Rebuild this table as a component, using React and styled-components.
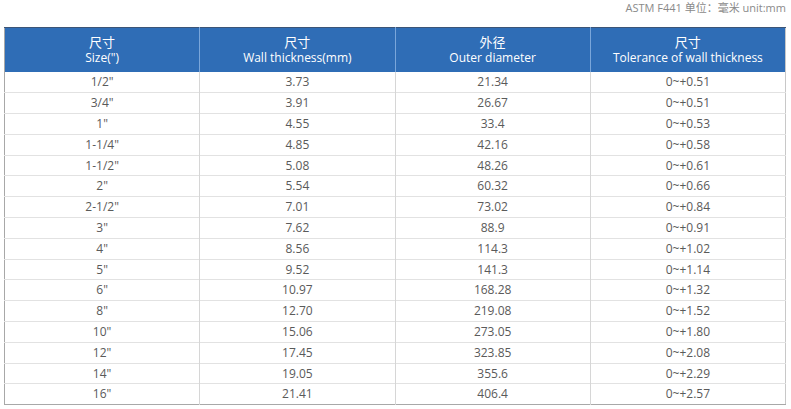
import React from "react";
import styled, { createGlobalStyle } from "styled-components";

const Global = createGlobalStyle`
  html, body { margin: 0; padding: 0; background: #fff; }
  body { font-family: "Open Sans", "Noto Sans", "Noto Sans CJK SC", sans-serif; }
`;

const Page = styled.div`
  width: 791px;
  padding: 0 5px 0 4px;
  box-sizing: border-box;
`;

const Caption = styled.div`
  height: 27px;
  display: flex;
  justify-content: flex-end;
  align-items: flex-start;
  padding-top: 1px;
  box-sizing: border-box;
  font-size: 11px;
  line-height: 14px;
  color: #8a8a8a;
  font-family: "Open Sans", "Noto Sans CJK SC", sans-serif;
`;

const Table = styled.table`
  width: 782px;
  border-collapse: collapse;
  table-layout: fixed;
  border-left: 1px solid #a8a8a8;
  border-right: 1px solid #c8c8c8;
  border-bottom: 1px solid #a8a8a8;
`;

const HeadRow = styled.tr`
  background: #2f6db6;
  border-top: 1px solid #3c5577;
`;

const HeadCell = styled.th`
  height: 44px;
  padding: 0;
  color: #fff;
  font-weight: 400;
  font-size: 12px;
  text-align: center;
  vertical-align: middle;
  border-left: 1px solid #7aa6da;
  &:first-child { border-left: none; }
`;

const Zh = styled.div`
  font-family: "Noto Sans CJK SC", sans-serif;
  font-size: 13px;
  line-height: 16px;
`;

const En = styled.div`
  font-size: 12px;
  line-height: 16px;
`;

const Row = styled.tr`
  height: 20.8px;
  border-top: 1px solid #e2e2e2;
  &:first-child { border-top: none; }
`;

const Cell = styled.td`
  padding: 0;
  text-align: center;
  font-size: 12px;
  line-height: 16px;
  color: #5a5a5a;
  border-left: 1px solid #d6d6d6;
  &:first-child { border-left: none; }
`;

const heads = [
  ["尺寸", 'Size(")'],
  ["尺寸", "Wall thickness(mm)"],
  ["外径", "Outer diameter"],
  ["尺寸", "Tolerance of wall thickness"],
];

const rows = [
  ['1/2"', "3.73", "21.34", "0~+0.51"],
  ['3/4"', "3.91", "26.67", "0~+0.51"],
  ['1"', "4.55", "33.4", "0~+0.53"],
  ['1-1/4"', "4.85", "42.16", "0~+0.58"],
  ['1-1/2"', "5.08", "48.26", "0~+0.61"],
  ['2"', "5.54", "60.32", "0~+0.66"],
  ['2-1/2"', "7.01", "73.02", "0~+0.84"],
  ['3"', "7.62", "88.9", "0~+0.91"],
  ['4"', "8.56", "114.3", "0~+1.02"],
  ['5"', "9.52", "141.3", "0~+1.14"],
  ['6"', "10.97", "168.28", "0~+1.32"],
  ['8"', "12.70", "219.08", "0~+1.52"],
  ['10"', "15.06", "273.05", "0~+1.80"],
  ['12"', "17.45", "323.85", "0~+2.08"],
  ['14"', "19.05", "355.6", "0~+2.29"],
  ['16"', "21.41", "406.4", "0~+2.57"],
];

export default function App() {
  return (
    <Page>
      <Global />
      <Caption>ASTM F441 单位：毫米 unit:mm</Caption>
      <Table>
        <thead>
          <HeadRow>
            {heads.map((h, i) => (
              <HeadCell key={i}>
                <Zh>{h[0]}</Zh>
                <En>{h[1]}</En>
              </HeadCell>
            ))}
          </HeadRow>
        </thead>
        <tbody>
          {rows.map((r, i) => (
            <Row key={i}>
              {r.map((c, j) => (
                <Cell key={j}>{c}</Cell>
              ))}
            </Row>
          ))}
        </tbody>
      </Table>
    </Page>
  );
}
